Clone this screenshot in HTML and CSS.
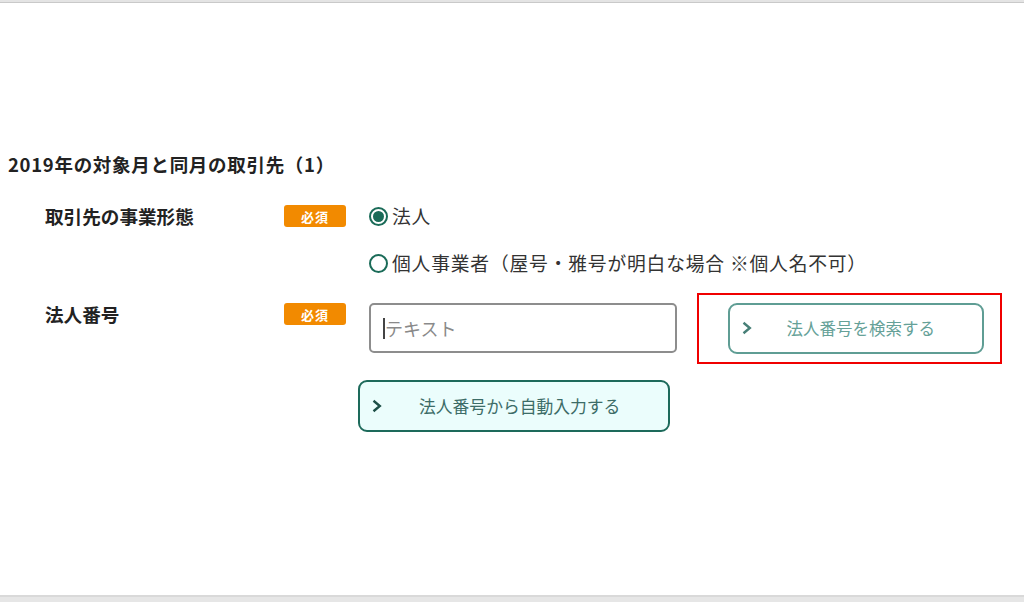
FILE: index.html
```html
<!DOCTYPE html>
<html lang="ja">
<head>
<meta charset="utf-8">
<title>取引先</title>
<link rel="stylesheet" href="styles.css">
</head>
<body>
<div class="page">
  <div class="topbar"></div>
  <main class="main">
    <h2 class="section-title">2019年の対象月と同月の取引先（1）</h2>
    <div class="form">
      <div class="row">
        <div class="label">取引先の事業形態</div>
        <div class="badge-cell"><span class="badge">必須</span></div>
        <div class="controls radios">
          <label class="radio"><span class="dot checked"></span><span class="radio-text">法人</span></label>
          <label class="radio"><span class="dot"></span><span class="radio-text">個人事業者（屋号・雅号が明白な場合 ※個人名不可）</span></label>
        </div>
      </div>
      <div class="row row-number">
        <div class="label">法人番号</div>
        <div class="badge-cell"><span class="badge">必須</span></div>
        <div class="controls inline">
          <div class="field"><input class="text-input" type="text" placeholder="テキスト"></div>
          <div class="highlight">
            <button class="btn btn-search" type="button">
              <svg class="chev" width="10" height="14" viewBox="0 0 10 14"><polyline points="1.5,1.8 7.8,7 1.5,12.2" fill="none" stroke="currentColor" stroke-width="2.4"/></svg>
              <span>法人番号を検索する</span>
            </button>
          </div>
        </div>
      </div>
      <div class="row-auto">
        <button class="btn btn-auto" type="button">
          <svg class="chev" width="10" height="14" viewBox="0 0 10 14"><polyline points="1.5,1.8 7.8,7 1.5,12.2" fill="none" stroke="currentColor" stroke-width="2.4"/></svg>
          <span>法人番号から自動入力する</span>
        </button>
      </div>
    </div>
  </main>
  <div class="bottombar"></div>
</div>
</body>
</html>
```
FILE: styles.css
```css
* { box-sizing: border-box; }
html, body { margin: 0; padding: 0; background: #fff; }
body {
  font-family: "Noto Sans CJK JP", "Noto Sans", sans-serif;
  color: #222;
}
.page {
  height: 602px;
  display: flex;
  flex-direction: column;
  overflow: hidden;
}
.topbar {
  height: 3px;
  background: #e4e4e4;
  border-bottom: 1px solid #c9c9c9;
}
.main { flex: 1; padding-top: 148px; }
.bottombar {
  height: 7px;
  background: #e6e6e6;
  border-top: 2px solid #d9d9d9;
}
.section-title {
  margin: 0 0 0 8px;
  font-size: 18.5px;
  line-height: 26px;
  font-weight: bold;
  letter-spacing: 0.7px;
}
.form { margin-top: 28px; }
.row {
  display: grid;
  grid-template-columns: 284px 85px 1fr;
  align-items: start;
}
.row-number { margin-top: 29px; }
.label {
  padding-left: 45px;
  font-size: 18.6px;
  line-height: 22px;
  font-weight: bold;
}
.badge {
  display: flex;
  align-items: center;
  justify-content: center;
  width: 62px;
  height: 22px;
  border-radius: 3px;
  background: #f28a00;
  color: #fff;
  font-size: 13px;
  font-weight: bold;
  letter-spacing: 1px;
}
.radios {
  display: flex;
  flex-direction: column;
  gap: 25px;
}
.radio {
  display: flex;
  align-items: center;
  height: 22px;
  gap: 4px;
}
.dot {
  width: 19px;
  height: 19px;
  border: 2px solid #1a6b58;
  border-radius: 50%;
  display: flex;
  align-items: center;
  justify-content: center;
  flex: none;
}
.dot.checked::after {
  content: "";
  width: 11px;
  height: 11px;
  border-radius: 50%;
  background: #1a6b58;
}
.radio-text {
  font-size: 18.8px;
  line-height: 22px;
  letter-spacing: 0.8px;
  color: #333;
}
.inline {
  display: flex;
  align-items: center;
  gap: 20px;
}
.field { position: relative; }
.field::before {
  content: "";
  position: absolute;
  left: 14px;
  top: 15px;
  width: 1.5px;
  height: 21px;
  background: #444;
}
.text-input {
  display: block;
  width: 308px;
  height: 50px;
  border: 2px solid #8d8d8d;
  border-radius: 5px;
  padding: 0 0 0 14px;
  font-family: inherit;
  font-size: 18px;
  color: #333;
  background: #fff;
}
.text-input::placeholder { color: #8a8a8a; }
.highlight {
  margin: -10px 0 -11px;
  width: 305px;
  height: 71px;
  border: 2.5px solid #f00000;
  padding: 7.5px 0 0 28.5px;
}
.btn {
  display: flex;
  align-items: center;
  gap: 35px;
  padding: 0 0 0 12px;
  font-family: inherit;
  font-size: 16.5px;
  border-radius: 9px;
  cursor: pointer;
  text-align: left;
}
.chev { flex: none; }
.btn-search {
  width: 256px;
  height: 51px;
  border: 2px solid #5f9d94;
  background: #fff;
  color: #66a198;
}
.btn-search .chev { color: #477f77; }
.row-auto {
  margin-top: 27px;
  padding-left: 358px;
}
.btn-auto {
  width: 312px;
  height: 52px;
  border: 2px solid #1d6a5b;
  background: #ebfdfc;
  color: #3c6c67;
  font-size: 16.8px;
  gap: 37px;
}
.btn-auto .chev { color: #1d4f47; }
```
